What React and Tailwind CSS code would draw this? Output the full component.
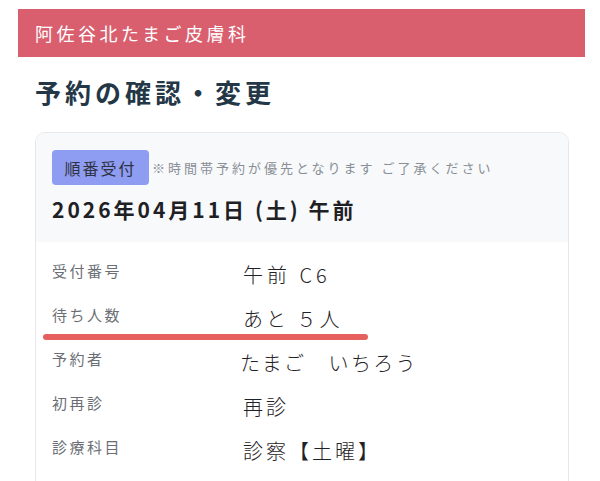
import React from 'react'

const rows = [
  { label: '受付番号', value: '午前 C6', track: 'tracking-[4px]' },
  { label: '待ち人数', value: 'あと ５人', track: 'tracking-[3px]', mark: true },
  { label: '予約者', value: 'たまご　いちろう', track: 'tracking-[2.3px] -ml-[3px]' },
  { label: '初再診', value: '再診', track: 'tracking-[3px]' },
  { label: '診療科目', value: '診察【土曜】', track: 'tracking-[3px]' },
]

const App = () => {
  return (
    <div
      className="w-[600px] h-[481px] overflow-hidden bg-white"
      style={{ fontFamily: '"Noto Sans CJK JP", "Noto Sans", sans-serif' }}
    >
      <div className="pt-[9px] px-[18px]">
        <div className="h-[48px] bg-[#d95f6f] flex items-center pl-[17px] w-[567px]">
          <span className="text-white text-[18px] tracking-[3.5px] leading-none">阿佐谷北たまご皮膚科</span>
        </div>
      </div>

      <h1 className="ml-[35px] mt-[17px] text-[26px] font-bold text-[#243746] leading-[36px] tracking-[4px]">
        予約の確認・変更
      </h1>

      <div className="ml-[35px] mt-[22px] w-[534px] h-[400px] rounded-[10px] border border-[#e6e8eb] overflow-hidden">
        <div className="bg-[#f7f9fb] px-[16px] pt-[17px] pb-[18px]">
          <div className="flex items-center">
            <span className="bg-[#8e9cf2] rounded-[4px] h-[35px] w-[97px] flex items-center justify-center text-[16px] text-[#2f3240] tracking-[2px]">
              順番受付
            </span>
            <span className="ml-[3px] text-[13px] text-[#8a8f96] tracking-[3px]">※時間帯予約が優先となります ご了承ください</span>
          </div>
          <div className="mt-[9px] text-[21px] font-bold text-[#1e2024] leading-[30px] tracking-[3px]">
            2026年04月11日 (土) 午前
          </div>
        </div>

        <div className="pt-[14px]">
          {rows.map((r) => (
            <div key={r.label} className="relative flex h-[44px] pl-[16px]">
              <div className="w-[191px] pt-[3px] text-[15px] text-[#6b6f75] tracking-[2.5px] leading-[24px]">
                {r.label}
              </div>
              <div className={'pt-[5px] text-[20px] font-light text-[#1f2226] leading-[28px] ' + r.track}>
                {r.value}
              </div>
              {r.mark && (
                <div className="absolute left-[7px] top-[34px] w-[325px] h-[6px] rounded-full bg-[#e5605e]" />
              )}
            </div>
          ))}
        </div>
      </div>
    </div>
  )
}

export default App
